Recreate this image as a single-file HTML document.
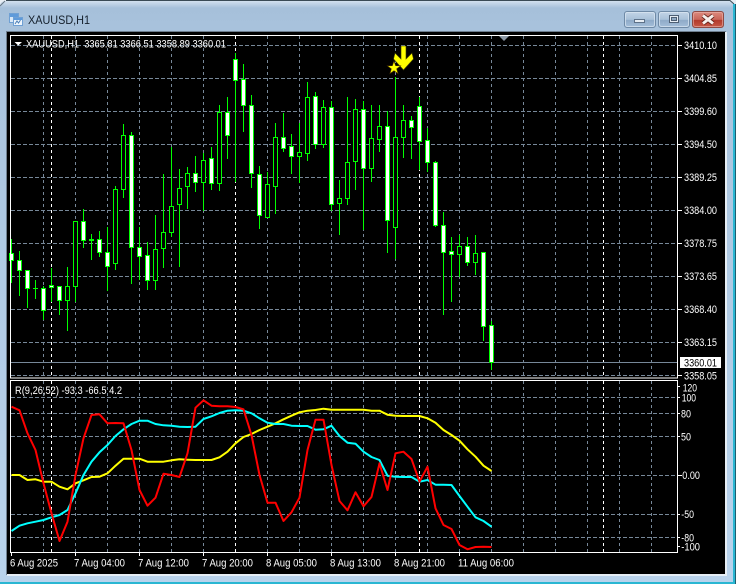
<!DOCTYPE html>
<html>
<head>
<meta charset="utf-8">
<title>XAUUSD,H1</title>
<style>
html,body{margin:0;padding:0;background:#e8eef4;width:736px;height:584px;overflow:hidden}
svg{display:block}
text{font-family:"Liberation Sans",sans-serif;font-size:11px;fill:#fff}
.c{shape-rendering:crispEdges}
</style>
</head>
<body>
<svg width="736" height="584" viewBox="0 0 736 584" xmlns="http://www.w3.org/2000/svg">
<defs>
<linearGradient id="tb" x1="0" y1="0" x2="0" y2="1">
<stop offset="0" stop-color="#d2e0ee"/><stop offset="0.012" stop-color="#a6c0da"/><stop offset="0.06" stop-color="#a9c3dd"/><stop offset="1" stop-color="#b9d3ec"/>
</linearGradient>
<linearGradient id="bt" x1="0" y1="0" x2="0" y2="1">
<stop offset="0" stop-color="#c3d5e7"/><stop offset="0.5" stop-color="#a9c1d9"/><stop offset="0.55" stop-color="#8fabc8"/><stop offset="1" stop-color="#a5c0db"/>
</linearGradient>
<linearGradient id="cl" x1="0" y1="0" x2="0" y2="1">
<stop offset="0" stop-color="#dd8c80"/><stop offset="0.5" stop-color="#c9665a"/><stop offset="0.55" stop-color="#b23a2c"/><stop offset="1" stop-color="#c85a48"/>
</linearGradient>
</defs>

<!-- window frame -->
<path d="M0 6Q0 1 6 1H730Q733 1 733 5V582H0Z" fill="url(#tb)"/>
<path d="M6 .5H730L734 4" fill="none" stroke="#3a4a55" stroke-width="1"/>
<path d="M0 6L5 1" stroke="#6a7a88" fill="none"/>
<rect x="0" y="582" width="736" height="2" fill="#2ab6d2" class="c"/>
<rect x="733" y="4" width="2" height="580" fill="#2ab6d2" class="c"/>
<rect x="735" y="4" width="1" height="580" fill="#1d5e70" class="c"/>

<!-- title icon -->
<g class="c">
<rect x="9.500" y="13.500" width="9" height="9" fill="#d8e8f8" stroke="#6fa0d4"/>
<rect x="10" y="14" width="8" height="3" fill="#5e9ada"/>
<rect x="13.500" y="17.500" width="9" height="8" fill="#eef5fc" stroke="#6fa0d4"/>
<rect x="14" y="18" width="8" height="2" fill="#5e9ada"/>
</g>
<path d="M15 24l2-3 1.500 2 2-3" fill="none" stroke="#4a7fb8" stroke-width="1"/>
<text x="28" y="24" textLength="62" lengthAdjust="spacingAndGlyphs" style="font-size:12px;fill:#15202c">XAUUSD,H1</text>

<!-- buttons -->
<rect x="624.500" y="11.500" width="31" height="16" rx="2.500" fill="url(#bt)" stroke="#6f8aa6"/>
<rect x="625.500" y="12.500" width="29" height="14" rx="2" fill="none" stroke="#dbe7f2" stroke-opacity=".7"/>
<rect x="634.500" y="19.500" width="10" height="3" fill="#e6edf4" stroke="#5d7188" class="c"/>
<rect x="658.500" y="11.500" width="31" height="16" rx="2.500" fill="url(#bt)" stroke="#6f8aa6"/>
<rect x="659.500" y="12.500" width="29" height="14" rx="2" fill="none" stroke="#dbe7f2" stroke-opacity=".7"/>
<rect x="669.500" y="15.500" width="9" height="7" fill="#e6edf4" stroke="#4d5f74" class="c"/>
<rect x="671.500" y="17.500" width="5" height="3" fill="#8ea8c2" stroke="#4d5f74" class="c"/>
<rect x="692.500" y="11.500" width="31" height="16" rx="2.500" fill="url(#cl)" stroke="#8e4a44"/>
<rect x="693.500" y="12.500" width="29" height="14" rx="2" fill="none" stroke="#eab4ac" stroke-opacity=".6"/>
<path d="M703 15.500L713 23.500M713 15.500L703 23.500" stroke="#5a1c14" stroke-width="4.500" fill="none"/>
<path d="M703 15.500L713 23.500M713 15.500L703 23.500" stroke="#f6efec" stroke-width="3" fill="none"/>

<!-- chart body -->
<g class="c">
<rect x="6" y="31" width="720" height="544" fill="#6f7f8f"/>
<rect x="7" y="32" width="718" height="542" fill="#000"/>
<rect x="7" y="574" width="720" height="2" fill="#e6eef5"/>
<rect x="725" y="32" width="2" height="544" fill="#e6eef5"/>
</g>

<!-- grid -->
<g class="c" fill="none" stroke="#778899" stroke-width="1" stroke-dasharray="4 2">
<path d="M11 45.500H678M11 78.500H678M11 111.500H678M11 144.500H678M11 177.500H678M11 210.500H678M11 243.500H678M11 276.500H678M11 309.500H678M11 342.500H678M11 375.500H678"/>
<path d="M11 397.500H678M11 413.500H678M11 436.500H678M11 475.500H678M11 514.500H678M11 537.500H678"/>
</g>
<g class="c" fill="none" stroke="#778899" stroke-width="1" stroke-dasharray="3 3">
<path d="M43.500 36V378M75.500 36V378M107.500 36V378M139.500 36V378M171.500 36V378M203.500 36V378M267.500 36V378M299.500 36V378M331.500 36V378M363.500 36V378M395.500 36V378M427.500 36V378M459.500 36V378M491.500 36V378M523.500 36V378M555.500 36V378M587.500 36V378M619.500 36V378M651.500 36V378"/>
<path d="M43.500 381V553M75.500 381V553M107.500 381V553M139.500 381V553M171.500 381V553M203.500 381V553M267.500 381V553M299.500 381V553M331.500 381V553M363.500 381V553M395.500 381V553M427.500 381V553M459.500 381V553M491.500 381V553M523.500 381V553M555.500 381V553M587.500 381V553M619.500 381V553M651.500 381V553"/>
</g>
<g class="c" fill="none" stroke="#fff" stroke-width="1" stroke-dasharray="3 3">
<path d="M51.500 36V378M235.500 36V378M419.500 36V378M603.500 36V378M51.500 381V553M235.500 381V553M419.500 381V553M603.500 381V553"/>
</g>
<!-- bid line -->
<rect x="11" y="362" width="667" height="1" fill="#778899" class="c"/>

<!-- candle wicks -->
<path class="c" fill="none" stroke="#00ff00" d="M11.500 239V283M19.500 251V296M27.500 270V308M35.500 280V299M43.500 286V320M51.500 268V302M59.500 286V315M67.500 267V331M75.500 221V302M83.500 209V248M91.500 234V260M99.500 231V257M107.500 227V291M115.500 186V270M123.500 124V198M131.500 132V284M139.500 227V280M147.500 242V290M155.500 215V290M163.500 174V268M171.500 147V237M179.500 169V267M187.500 167V209M195.500 156V192M203.500 153V211M211.500 147V190M219.500 105V191M227.500 97V159M235.500 53V182M243.500 64V132M251.500 95V188M259.500 166V229M267.500 172V217M275.500 123V214M283.500 113V152M291.500 134V174M299.500 123V183M307.500 82V161M315.500 92V149M323.500 100V148M331.500 101V211M339.500 180V235M347.500 97V205M355.500 99V190M363.500 101V230M371.500 105V182M379.500 105V152M387.500 111V253M395.500 77V259M403.500 105V158M411.500 116V159M419.500 97V170M427.500 128V172M435.500 161V227M443.500 212V315M451.500 237V302M459.500 235V277M467.500 237V266M475.500 235V275M483.500 252V341M491.500 321V370"/>
<!-- hollow bodies -->
<path class="c" fill="#000" stroke="#00ff00" d="M65.500 286.500h4v14h-4zM73.500 221.500h4v65h-4zM113.500 189.500h4v74h-4zM121.500 135.500h4v54h-4zM153.500 249.500h4v31h-4zM161.500 232.500h4v16h-4zM169.500 206.500h4v26h-4zM177.500 188.500h4v16h-4zM185.500 173.500h4v13h-4zM201.500 160.500h4v22h-4zM217.500 112.500h4v71h-4zM265.500 184.500h4v33h-4zM273.500 137.500h4v49h-4zM297.500 152.500h4v4h-4zM305.500 97.500h4v56h-4zM321.500 107.500h4v37h-4zM337.500 198.500h4v5h-4zM345.500 162.500h4v36h-4zM353.500 109.500h4v52h-4zM369.500 138.500h4v30h-4zM377.500 126.500h4v13h-4zM393.500 137.500h4v90h-4zM401.500 120.500h4v17h-4zM457.500 246.500h4v8h-4zM473.500 253.500h4v9h-4z"/>
<!-- white bodies -->
<path class="c" fill="#fff" stroke="#00ff00" d="M9.500 253.500h4v7h-4zM17.500 260.500h4v10h-4zM25.500 270.500h4v18h-4zM41.500 288.500h4v22h-4zM49.500 285.500h4v2h-4zM57.500 286.500h4v14h-4zM81.500 221.500h4v19h-4zM89.500 239.500h4v1h-4zM97.500 239.500h4v13h-4zM105.500 252.500h4v14h-4zM129.500 135.500h4v112h-4zM137.500 247.500h4v9h-4zM145.500 255.500h4v25h-4zM193.500 173.500h4v9h-4zM209.500 158.500h4v25h-4zM225.500 112.500h4v23h-4zM233.500 59.500h4v21h-4zM241.500 79.500h4v26h-4zM249.500 105.500h4v68h-4zM257.500 174.500h4v41h-4zM281.500 137.500h4v11h-4zM289.500 146.500h4v10h-4zM313.500 96.500h4v48h-4zM329.500 107.500h4v97h-4zM361.500 109.500h4v59h-4zM385.500 126.500h4v94h-4zM409.500 120.500h4v7h-4zM417.500 106.500h4v35h-4zM425.500 140.500h4v22h-4zM433.500 162.500h4v63h-4zM441.500 225.500h4v27h-4zM449.500 251.500h4v3h-4zM465.500 246.500h4v16h-4zM481.500 252.500h4v74h-4zM489.500 325.500h4v37h-4z"/>
<rect class="c" x="33" y="288" width="5" height="1" fill="#00ff00"/>

<!-- chart frames -->
<g class="c" fill="none" stroke="#fff">
<rect x="10.500" y="35.500" width="667" height="342.500"/>
<rect x="10.500" y="380.500" width="667" height="172"/>
</g>
<path class="c" fill="none" stroke="#fff" d="M678 45.500h4M678 78.500h4M678 111.500h4M678 144.500h4M678 177.500h4M678 210.500h4M678 243.500h4M678 276.500h4M678 309.500h4M678 342.500h4M678 375.500h4M678 386.500h2M678 397.500h2M678 413.500h2M678 436.500h2M678 475.500h4M678 514.500h2M678 537.500h2M678 546.500h2M11.500 553v3M75.500 553v3M139.500 553v3M203.500 553v3M267.500 553v3M331.500 553v3M395.500 553v3M459.500 553v3"/>

<!-- shift marker -->
<polygon points="499,36 509,36 504,41" fill="#8d99a6"/>

<!-- arrow + star -->
<polygon points="401,46 406,46 406,59 412,53 413.500,59 403.500,70 393.500,59 395,53 401,59" fill="#ffff00" stroke="#3a3a00" stroke-width=".6"/>
<polygon points="394,61 395.650,65.730 400.660,65.840 396.660,68.870 398.110,73.660 394,70.800 389.890,73.660 391.340,68.870 387.340,65.840 392.350,65.730" fill="#ffff00" stroke="#4a3000" stroke-width=".6"/>

<!-- indicator lines -->
<g fill="none" stroke-width="2" stroke-linejoin="round">
<polyline stroke="#ffff00" points="11.500,475 19.500,475 27.500,480 35.500,479.300 43.500,481.700 51.500,481.700 59.500,486.700 67.500,489.300 75.500,483.300 83.500,480.300 91.500,477 99.500,476.700 107.500,473.300 115.500,465.700 123.500,458.700 131.500,458.700 139.500,458.700 147.500,461.700 155.500,461.700 163.500,461.700 171.500,460.300 179.500,459.300 187.500,459.700 195.500,460 203.500,460 211.500,460 219.500,457.300 227.500,451.700 235.500,443.300 243.500,437 251.500,434 259.500,430 267.500,426.700 275.500,423.300 283.500,419.300 291.500,415.700 299.500,412.300 307.500,410.700 315.500,410 323.500,408.700 331.500,409.700 339.500,409.700 347.500,409.700 355.500,409.700 363.500,409.700 371.500,410.700 379.500,410.700 387.500,414.700 395.500,415.700 403.500,416 411.500,416 419.500,416 427.500,418.300 435.500,422.700 443.500,430 451.500,435 459.500,440.700 467.500,449.300 475.500,456.700 483.500,465.700 491.500,471"/>
<polyline stroke="#00ffff" points="11.500,531 19.500,525.700 27.500,523.300 35.500,521.700 43.500,520 51.500,517.300 59.500,515 67.500,510 75.500,493.300 83.500,475 91.500,461.700 99.500,452.300 107.500,445 115.500,436 123.500,429.300 131.500,424 139.500,420.700 147.500,420.700 155.500,424 163.500,425.300 171.500,425.700 179.500,426.700 187.500,427 195.500,426.700 203.500,419 211.500,416.300 219.500,413 227.500,410.700 235.500,410.300 243.500,410.700 251.500,413.300 259.500,418.300 267.500,422.700 275.500,424 283.500,424 291.500,425.700 299.500,426 307.500,426 315.500,429.700 323.500,429.300 331.500,425.700 339.500,436 347.500,442.700 355.500,443.700 363.500,451.700 371.500,457 379.500,460 387.500,475.700 395.500,476.700 403.500,477 411.500,477 419.500,481.700 427.500,480 435.500,484.700 443.500,484.700 451.500,485 459.500,496 467.500,506.700 475.500,517.300 483.500,521 491.500,526.700"/>
<polyline stroke="#ff0000" points="11.500,406.700 19.500,410.300 27.500,433.300 35.500,450 43.500,483.300 51.500,513.300 59.500,541 67.500,521.700 75.500,475 83.500,438.300 91.500,415 99.500,414.300 107.500,423.300 115.500,423 123.500,423.300 131.500,450 139.500,490 147.500,505.700 155.500,497.700 163.500,473.700 171.500,475 179.500,477 187.500,453.300 195.500,407.700 203.500,400.300 211.500,405.700 219.500,406.300 227.500,406.300 235.500,407 243.500,409.300 251.500,435 259.500,475 267.500,502.700 275.500,502.700 283.500,521 291.500,512.300 299.500,497.700 307.500,450 315.500,419.700 323.500,419.700 331.500,465 339.500,501 347.500,510.300 355.500,492.300 363.500,506.300 371.500,497 379.500,463.300 387.500,490 395.500,453.300 403.500,451.700 411.500,459 419.500,481.700 427.500,466.700 435.500,508.300 443.500,525 451.500,529 459.500,545 467.500,549.300 475.500,547 483.500,546.700 491.500,547"/>
</g>

<!-- header labels -->
<polygon points="14.500,42 22,42 18.250,45.500" fill="#fff"/>
<text x="26" y="47.500" textLength="200" lengthAdjust="spacingAndGlyphs" xml:space="preserve">XAUUSD,H1  3365.81 3366.51 3358.89 3360.01</text>
<text x="15" y="394" textLength="107" lengthAdjust="spacingAndGlyphs">R(9,26,52) -93.3 -66.5 4.2</text>

<!-- price scale -->
<g>
<text x="684" y="49" textLength="33" lengthAdjust="spacingAndGlyphs">3410.10</text>
<text x="684" y="82" textLength="33" lengthAdjust="spacingAndGlyphs">3404.85</text>
<text x="684" y="115" textLength="33" lengthAdjust="spacingAndGlyphs">3399.60</text>
<text x="684" y="148" textLength="33" lengthAdjust="spacingAndGlyphs">3394.50</text>
<text x="684" y="181" textLength="33" lengthAdjust="spacingAndGlyphs">3389.25</text>
<text x="684" y="214" textLength="33" lengthAdjust="spacingAndGlyphs">3384.00</text>
<text x="684" y="247" textLength="33" lengthAdjust="spacingAndGlyphs">3378.75</text>
<text x="684" y="280" textLength="33" lengthAdjust="spacingAndGlyphs">3373.65</text>
<text x="684" y="313" textLength="33" lengthAdjust="spacingAndGlyphs">3368.40</text>
<text x="684" y="346" textLength="33" lengthAdjust="spacingAndGlyphs">3363.15</text>
<rect x="680" y="357" width="41" height="11" fill="#fff" class="c"/>
<text x="684" y="366.500" textLength="33" lengthAdjust="spacingAndGlyphs" style="fill:#000">3360.01</text>
<text x="684" y="379.500" textLength="33" lengthAdjust="spacingAndGlyphs">3358.05</text>
<text x="682.700" y="391.500" textLength="14.300" lengthAdjust="spacingAndGlyphs">120</text>
<text x="681.700" y="401.500" textLength="14.300" lengthAdjust="spacingAndGlyphs">100</text>
<text x="681" y="417.500" textLength="10" lengthAdjust="spacingAndGlyphs">80</text>
<text x="681" y="440.500" textLength="10" lengthAdjust="spacingAndGlyphs">50</text>
<text x="682.300" y="479" textLength="17.700" lengthAdjust="spacingAndGlyphs">0.00</text>
<text x="681.300" y="518" textLength="12.700" lengthAdjust="spacingAndGlyphs">-50</text>
<text x="681.300" y="541.500" textLength="12.700" lengthAdjust="spacingAndGlyphs">-80</text>
<text x="681.300" y="550.500" textLength="18.700" lengthAdjust="spacingAndGlyphs">-100</text>
</g>

<!-- time scale -->
<g>
<text x="10" y="566.500" textLength="48" lengthAdjust="spacingAndGlyphs">6 Aug 2025</text>
<text x="74" y="566.500" textLength="51" lengthAdjust="spacingAndGlyphs">7 Aug 04:00</text>
<text x="138" y="566.500" textLength="51" lengthAdjust="spacingAndGlyphs">7 Aug 12:00</text>
<text x="202" y="566.500" textLength="51" lengthAdjust="spacingAndGlyphs">7 Aug 20:00</text>
<text x="266" y="566.500" textLength="51" lengthAdjust="spacingAndGlyphs">8 Aug 05:00</text>
<text x="330" y="566.500" textLength="51" lengthAdjust="spacingAndGlyphs">8 Aug 13:00</text>
<text x="394" y="566.500" textLength="51" lengthAdjust="spacingAndGlyphs">8 Aug 21:00</text>
<text x="458" y="566.500" textLength="56" lengthAdjust="spacingAndGlyphs">11 Aug 06:00</text>
</g>
</svg>
</body>
</html>
